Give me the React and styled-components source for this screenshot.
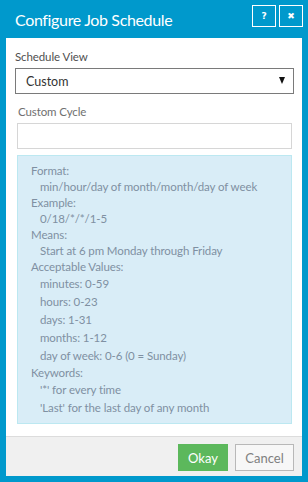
import React from 'react';
import styled, { createGlobalStyle } from 'styled-components';

const GlobalStyle = createGlobalStyle`
	html, body {
		margin: 0;
		padding: 0;
		background: #0099cc;
		font-family: Lato, "Open Sans", sans-serif;
	}
`;

const Dialog = styled.div`
	width: 308px;
	height: 482px;
	display: flex;
	flex-direction: column;
	background: #0099cc;
	box-sizing: border-box;
	padding: 0 6px 6px;
`;

const Header = styled.div`
	height: 38px;
	display: flex;
	align-items: flex-start;
	justify-content: space-between;
	flex-shrink: 0;
`;

const Title = styled.h1`
	margin: 10px 0 0 9px;
	font-size: 16px;
	font-weight: 400;
	letter-spacing: -0.35px;
	color: #ffffff;
	line-height: 20px;
`;

const HeaderButtons = styled.div`
	display: flex;
	gap: 3px;
	margin-top: 5px;
	margin-right: -1px;
`;

const IconButton = styled.button`
	width: 24px;
	height: 22px;
	box-sizing: border-box;
	border: 1px solid #ffffff;
	background: transparent;
	color: #ffffff;
	padding: 0;
	display: flex;
	align-items: center;
	justify-content: center;
	font-family: "DejaVu Sans", sans-serif;
	font-weight: 700;
	font-size: 9px;
`;

const Panel = styled.div`
	flex: 1;
	background: #ffffff;
	display: flex;
	flex-direction: column;
`;

const Body = styled.div`
	flex: 1;
	padding: 11px 8px 0 9px;
	display: flex;
	flex-direction: column;
`;

const Label = styled.label`
	display: block;
	font-size: 11.5px;
	letter-spacing: -0.1px;
	color: ${p => (p.muted ? '#6f6f6f' : '#505050')};
	line-height: 16px;
	margin: 0 0 3px ${p => p.indent || 0}px;
`;

const Select = styled.div`
	height: 26px;
	box-sizing: border-box;
	border: 1px solid #7a7a7a;
	display: flex;
	align-items: center;
	justify-content: space-between;
	padding: 0 8px 0 10px;
	font-size: 12.5px;
	color: #333333;
	margin-bottom: 10px;
`;

const Caret = styled.span`
	width: 0;
	height: 0;
	border-left: 3.5px solid transparent;
	border-right: 3.5px solid transparent;
	border-top: 7px solid #111111;
	margin-top: -1px;
`;

const Section = styled.div`
	padding: 0 2px;
	display: flex;
	flex-direction: column;
`;

const Input = styled.div`
	height: 26px;
	box-sizing: border-box;
	border: 1px solid #d6d6d6;
	margin-bottom: 6px;
`;

const InfoBox = styled.div`
	background: #d9edf7;
	border: 1px solid #bce8f1;
	padding: 7px 13px 6px;
	color: #7f90a2;
	font-size: 11.5px;
	letter-spacing: -0.1px;
`;

const Heading = styled.div`
	line-height: 16px;
`;

const Item = styled.div`
	padding-left: 9px;
	line-height: ${p => (p.tall ? 18 : 16)}px;
	white-space: nowrap;
`;

const Footer = styled.div`
	height: 40px;
	box-sizing: border-box;
	border-top: 1px solid #dcdcdc;
	background: #f0f0f0;
	display: flex;
	justify-content: flex-end;
	align-items: flex-start;
	padding: 7px 8px 0 0;
	gap: 7px;
`;

const Button = styled.button`
	height: 27px;
	box-sizing: border-box;
	padding: 0;
	width: ${p => p.w}px;
	font-family: Lato, "Open Sans", sans-serif;
	font-size: 13px;
	border: 1px solid ${p => (p.primary ? '#5cb85c' : '#b8b8b8')};
	background: ${p => (p.primary ? '#5cb85c' : '#f7f7f7')};
	color: ${p => (p.primary ? '#ffffff' : '#808080')};
`;

export default function App() {
	return (
		<>
			<GlobalStyle />
			<Dialog>
				<Header>
					<Title>Configure Job Schedule</Title>
					<HeaderButtons>
						<IconButton>?</IconButton>
						<IconButton>✖</IconButton>
					</HeaderButtons>
				</Header>
				<Panel>
					<Body>
						<Label>Schedule View</Label>
						<Select>
							<span>Custom</span>
							<Caret />
						</Select>
						<Section>
							<Label muted indent={1}>Custom Cycle</Label>
							<Input />
							<InfoBox>
								<Heading>Format:</Heading>
								<Item>min/hour/day of month/month/day of week</Item>
								<Heading>Example:</Heading>
								<Item>0/18/*/*/1-5</Item>
								<Heading>Means:</Heading>
								<Item>Start at 6 pm Monday through Friday</Item>
								<Heading>Acceptable Values:</Heading>
								<Item tall>minutes: 0-59</Item>
								<Item tall>hours: 0-23</Item>
								<Item tall>days: 1-31</Item>
								<Item tall>months: 1-12</Item>
								<Item tall>day of week: 0-6 (0 = Sunday)</Item>
								<Heading>Keywords:</Heading>
								<Item tall>'*' for every time</Item>
								<Item tall>'Last' for the last day of any month</Item>
							</InfoBox>
						</Section>
					</Body>
					<Footer>
						<Button primary w={50}>Okay</Button>
						<Button w={59}>Cancel</Button>
					</Footer>
				</Panel>
			</Dialog>
		</>
	);
}
